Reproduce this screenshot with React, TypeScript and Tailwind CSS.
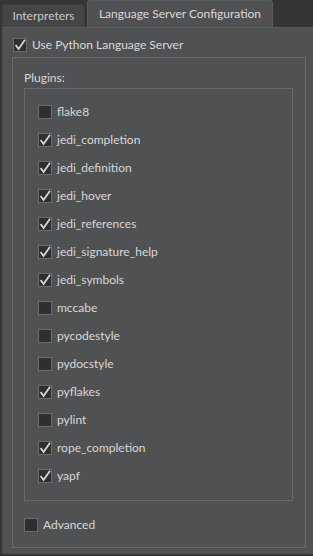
import React from "react";

// ============ CHECKBOX ============

function CheckBox({ checked, label }: { checked: boolean; label: string }) {
  return (
    <div className="flex items-center h-[28px]">
      <div className="w-[14px] h-[14px] border border-[#6c6c6c] bg-[#2e2f31] flex items-center justify-center">
        {checked && (
          <svg width="12" height="12" viewBox="0 0 12 12">
            <path
              d="M1.6 6 L4.6 10 L11 0.8"
              fill="none"
              stroke="#d8d8d8"
              strokeWidth="1.8"
            />
          </svg>
        )}
      </div>
      <span className="ml-[5px] text-[12px] text-[#d8d8d8] leading-none">
        {label}
      </span>
    </div>
  );
}

const plugins = [
  { name: "flake8", on: false },
  { name: "jedi_completion", on: true },
  { name: "jedi_definition", on: true },
  { name: "jedi_hover", on: true },
  { name: "jedi_references", on: true },
  { name: "jedi_signature_help", on: true },
  { name: "jedi_symbols", on: true },
  { name: "mccabe", on: false },
  { name: "pycodestyle", on: false },
  { name: "pydocstyle", on: false },
  { name: "pyflakes", on: true },
  { name: "pylint", on: false },
  { name: "rope_completion", on: true },
  { name: "yapf", on: true },
];

export default function App() {
  return (
    <div className="w-[313px] h-[556px] bg-[#353535] flex flex-col overflow-hidden font-['Lato',sans-serif]">
      {/* Tabs */}
      <div className="h-[27px] flex items-end pl-[2px] shrink-0">
        <div className="w-[83px] h-[23px] bg-[#444546] border border-b-0 border-[#3d3d3d] rounded-t-[3px] flex items-center justify-center text-[12px] text-[#c9c9c9]">
          Interpreters
        </div>
        <div className="ml-[2px] w-[186px] h-[27px] bg-[#505153] border border-b-0 border-[#5a5a5a] rounded-t-[3px] flex items-center justify-center text-[12px] text-[#d8d8d8]">
          Language Server Configuration
        </div>
      </div>

      {/* Panel */}
      <div className="flex-1 ml-[2px] mb-[2px] bg-[#505153] border-t border-[#5a5a5a] flex flex-col pl-[10px] pr-[7px]">
        <div className="h-[29px] flex items-center pt-[4px] pl-[1px] -mb-[3px]">
          <CheckBox checked label="Use Python Language Server" />
        </div>

        <div className="mt-[3px] h-[491px] border border-[#6a6a6a] flex flex-col pl-[11px] pr-[12px]">
          <div className="h-[30px] flex items-end pb-[1px] text-[12px] text-[#d8d8d8]">
            Plugins:
          </div>
          <div className="h-[413px] border border-[#6a6a6a] pl-[13px] pt-[9px]">
            {plugins.map((p) => (
              <CheckBox key={p.name} checked={p.on} label={p.name} />
            ))}
          </div>
          <div className="mt-[10px]">
            <CheckBox checked={false} label="Advanced" />
          </div>
        </div>
      </div>
    </div>
  );
}
